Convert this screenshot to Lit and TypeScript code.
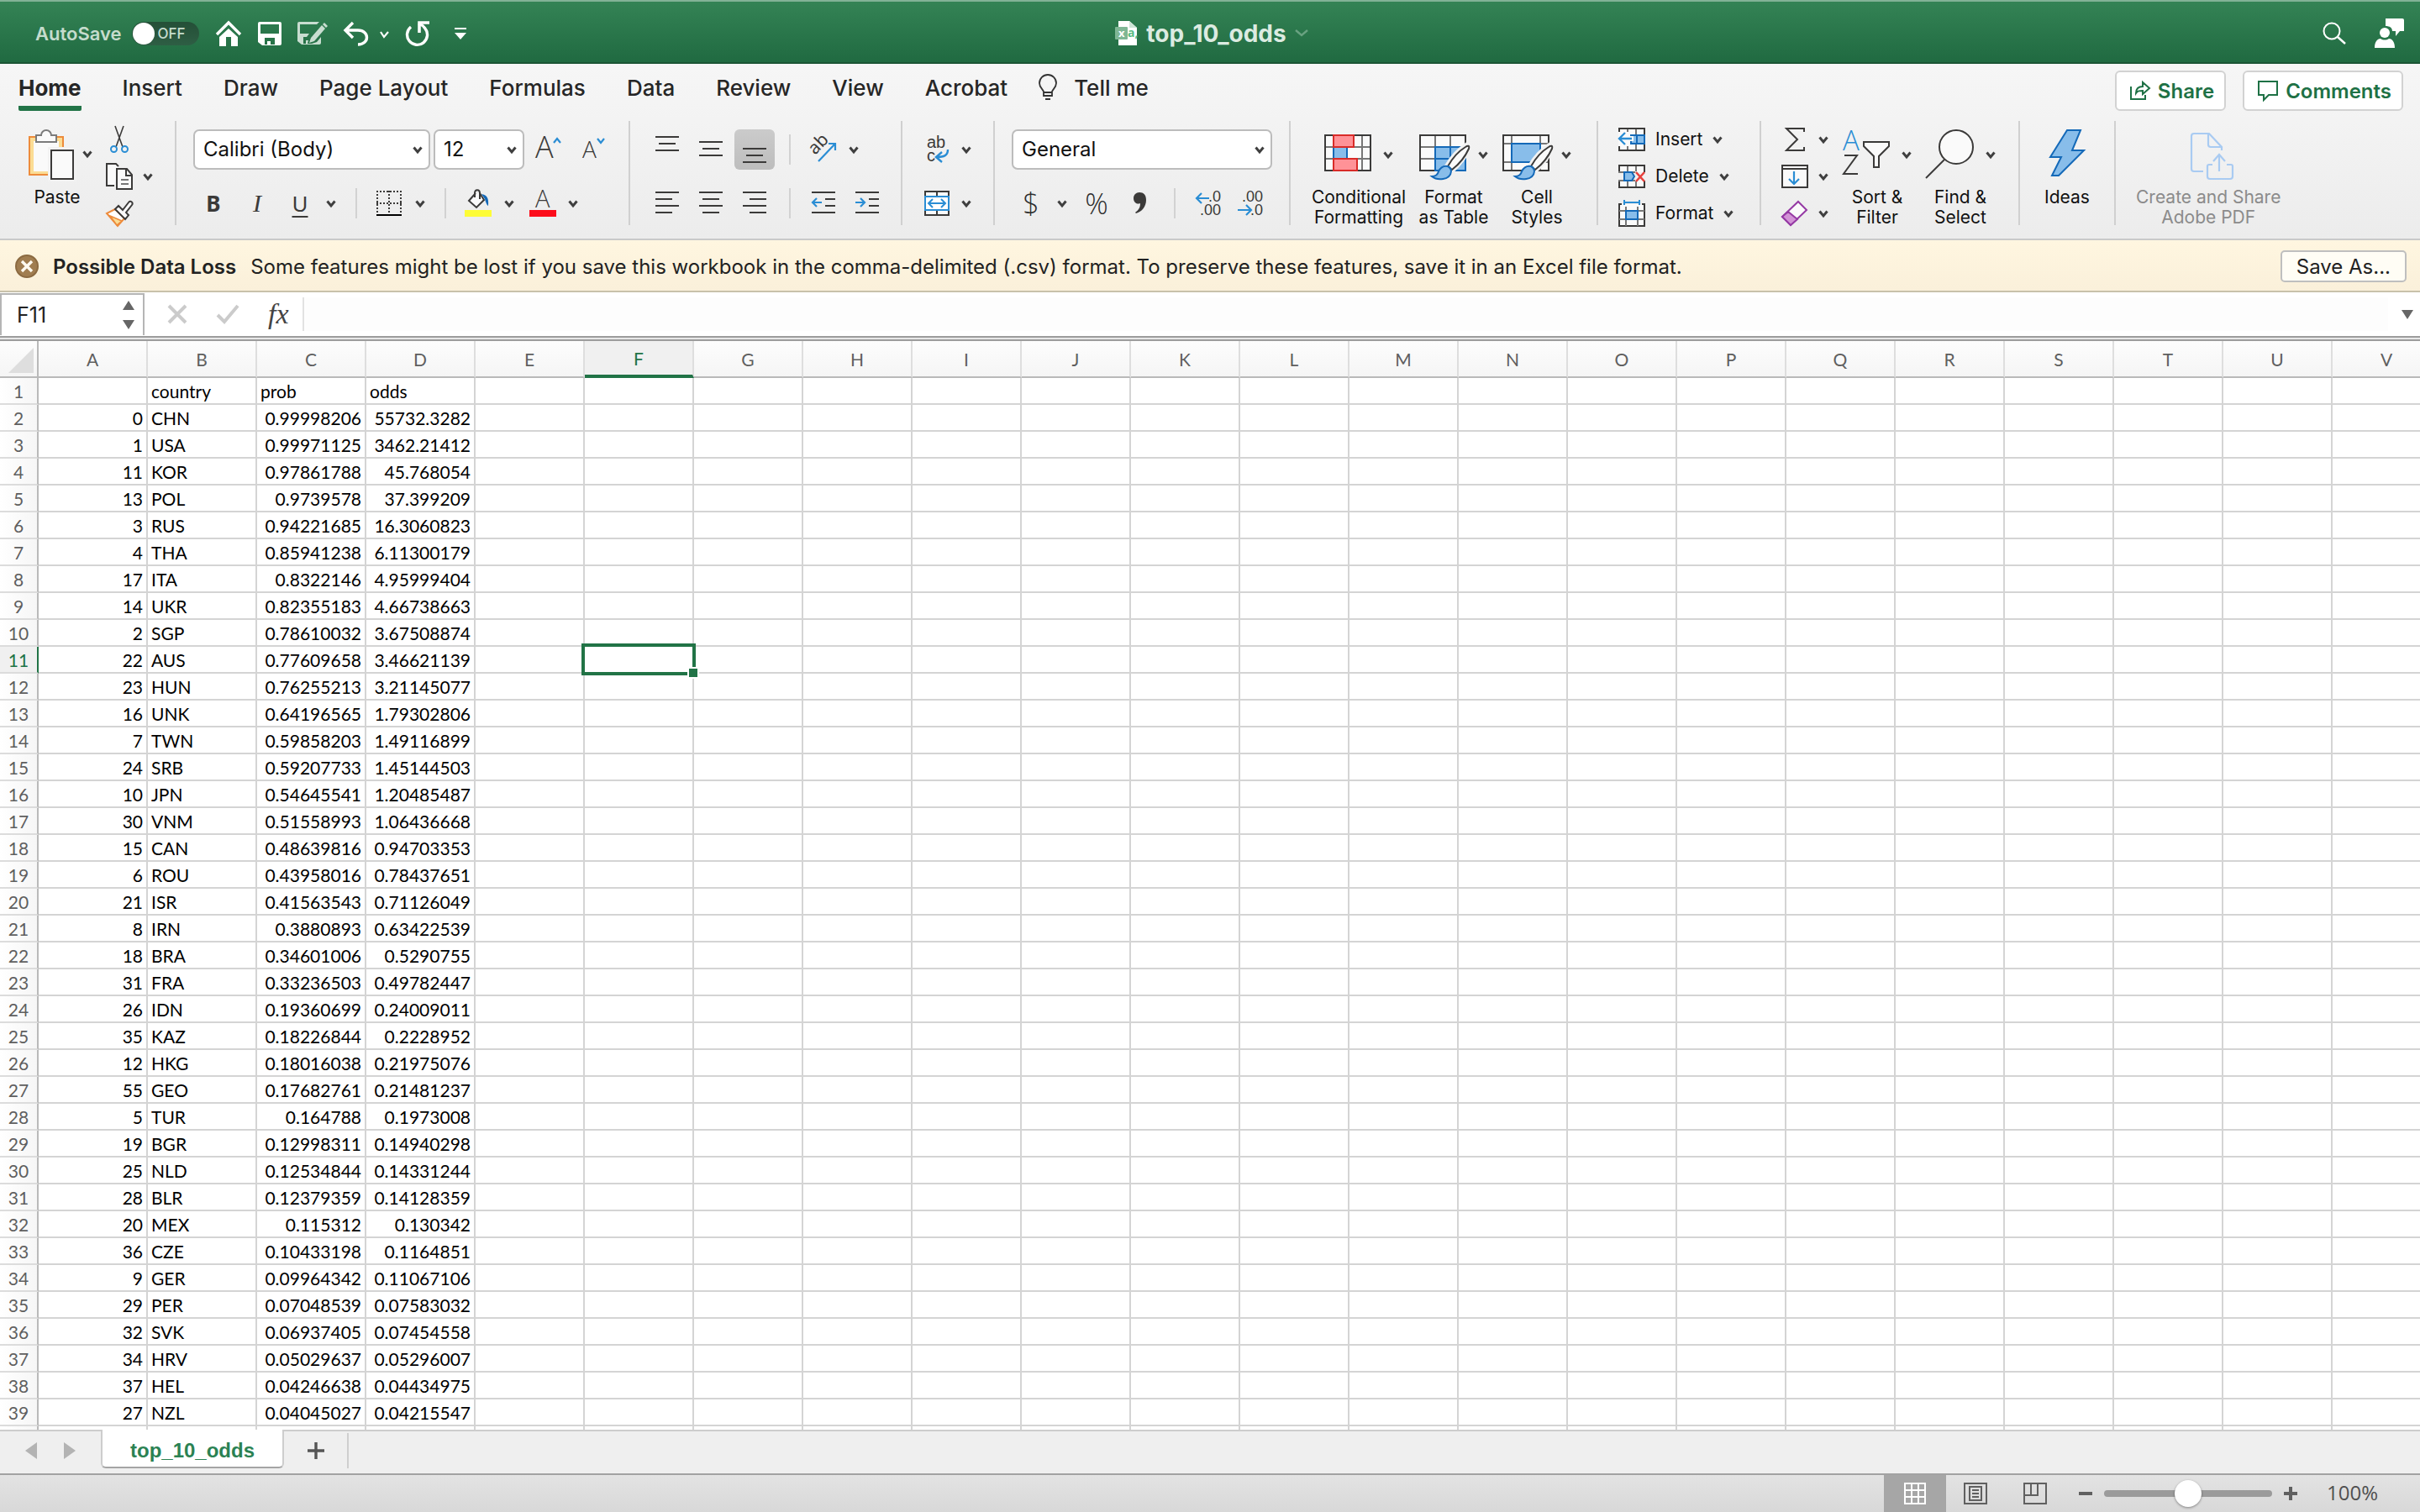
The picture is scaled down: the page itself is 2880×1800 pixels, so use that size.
import { LitElement, html, css, svg } from "lit";
import { customElement, property } from "lit/decorators.js";
import { classMap } from "lit/directives/class-map.js";

type Row = [string, string, string, string];

const ROWS: Row[] = [
  ["", "country", "prob", "odds"],
  ["0", "CHN", "0.99998206", "55732.3282"],
  ["1", "USA", "0.99971125", "3462.21412"],
  ["11", "KOR", "0.97861788", "45.768054"],
  ["13", "POL", "0.9739578", "37.399209"],
  ["3", "RUS", "0.94221685", "16.3060823"],
  ["4", "THA", "0.85941238", "6.11300179"],
  ["17", "ITA", "0.8322146", "4.95999404"],
  ["14", "UKR", "0.82355183", "4.66738663"],
  ["2", "SGP", "0.78610032", "3.67508874"],
  ["22", "AUS", "0.77609658", "3.46621139"],
  ["23", "HUN", "0.76255213", "3.21145077"],
  ["16", "UNK", "0.64196565", "1.79302806"],
  ["7", "TWN", "0.59858203", "1.49116899"],
  ["24", "SRB", "0.59207733", "1.45144503"],
  ["10", "JPN", "0.54645541", "1.20485487"],
  ["30", "VNM", "0.51558993", "1.06436668"],
  ["15", "CAN", "0.48639816", "0.94703353"],
  ["6", "ROU", "0.43958016", "0.78437651"],
  ["21", "ISR", "0.41563543", "0.71126049"],
  ["8", "IRN", "0.3880893", "0.63422539"],
  ["18", "BRA", "0.34601006", "0.5290755"],
  ["31", "FRA", "0.33236503", "0.49782447"],
  ["26", "IDN", "0.19360699", "0.24009011"],
  ["35", "KAZ", "0.18226844", "0.2228952"],
  ["12", "HKG", "0.18016038", "0.21975076"],
  ["55", "GEO", "0.17682761", "0.21481237"],
  ["5", "TUR", "0.164788", "0.1973008"],
  ["19", "BGR", "0.12998311", "0.14940298"],
  ["25", "NLD", "0.12534844", "0.14331244"],
  ["28", "BLR", "0.12379359", "0.14128359"],
  ["20", "MEX", "0.115312", "0.130342"],
  ["36", "CZE", "0.10433198", "0.1164851"],
  ["9", "GER", "0.09964342", "0.11067106"],
  ["29", "PER", "0.07048539", "0.07583032"],
  ["32", "SVK", "0.06937405", "0.07454558"],
  ["34", "HRV", "0.05029637", "0.05296007"],
  ["37", "HEL", "0.04246638", "0.04434975"],
  ["27", "NZL", "0.04045027", "0.04215547"],
];

const COLUMNS = "ABCDEFGHIJKLMNOPQRSTUV".split("");

const INK = "#3b3a39";
const BLUE = "#2a8dd4";
const DEEP = "#1469b8";
const SKY = "#88bdea";
const PAPER = "#fafafa";

const chev = svg`<path d="M1.5 1.5 6 7 10.5 1.5" fill="none" stroke="#3f3f3f" stroke-width="3"/>`;
const chevron = () => html`<svg class="chev" width="12" height="9" viewBox="0 0 12 9">${chev}</svg>`;
const chevButton = (label: string) =>
  html`<button class="tool" aria-label=${label}>${chevron()}</button>`;

/* Horizontal strokes of the alignment icons: [x1, x2] for each line. */
const lines = (spans: number[][]) => html`<svg width="28" height="${spans.length * 8 - 4}" viewBox="0 0 28 ${spans.length * 8 - 4}">
  ${spans.map(([a, b], i) => svg`<path d="M${a} ${i * 8 + 1}H${b}" stroke="${INK}" stroke-width="2"/>`)}
</svg>`;

const brush = svg`
  <path d="M56 19c2-2 4 0 3 3-4 9-12 20-20 27l-6-5c5-9 14-19 23-25z" fill="#f2f2f2" stroke="#f2f2f2" stroke-width="6"/>
  <path d="M55 21c3-2 5-2 4 2-4 9-11 18-20 25l-5-4c5-9 13-18 21-23z" fill="${PAPER}" stroke="${INK}" stroke-width="2"/>
  <path d="M34 44c-5-1-9 2-11 6-1 4-3 6-8 6 6 5 22 5 23-6 0-3-2-5-4-6z" fill="${SKY}" stroke="${DEEP}" stroke-width="2"/>`;

const icons = {
  home: html`<svg width="32" height="32" viewBox="0 0 32 32"><path d="M2 17 16 3l14 14" fill="none" stroke="#fff" stroke-width="3.4"/><path d="M16 10 27 20v11h-8V20h-6v11H5V20z" fill="#fff"/></svg>`,
  save: html`<svg width="28" height="30" viewBox="0 0 28 30"><path fill-rule="evenodd" d="M2 1h24a2 2 0 0 1 2 2v24a2 2 0 0 1-2 2H5l-5-4V3a2 2 0 0 1 2-2zM3 4v11h22V4zM8 20v8h3v-4h4v4h5v-8z" fill="#fff"/></svg>`,
  saveEdit: html`<svg width="36" height="32" viewBox="0 0 36 32"><path fill-rule="evenodd" d="M2 2h24l-3 3H3v11h11l-3 4H7v8h3v-4h3l-1 4h5l6-2 5-6v7a2 2 0 0 1-2 2H5l-5-4V4a2 2 0 0 1 2-2z" fill="#c8ddd0"/><path d="m29 6 4 4-13 15-6 2 2-6z" fill="#c8ddd0"/><path d="m30 5 2-2 4 4-2 2z" fill="#c8ddd0"/></svg>`,
  undo: html`<svg width="54" height="32" viewBox="0 0 54 32"><path d="M11 3 2 12l9 9M3 12h14c14 0 14 17 0 17" fill="none" stroke="#fff" stroke-width="3.4"/><path d="m44 14 4 6 5-6" fill="none" stroke="#fff" stroke-width="2.2"/></svg>`,
  redo: html`<svg width="30" height="32" viewBox="0 0 30 32"><path d="M7 8a12 12 0 1 0 17 2c-2-3-5-5-8-6" fill="none" stroke="#fff" stroke-width="3.4"/><path d="M17 15V3h12" fill="none" stroke="#fff" stroke-width="3.6"/></svg>`,
  customise: html`<svg width="36" height="32" viewBox="0 0 36 32"><path d="M10 9h14v2H10zM10 15h14l-7 8z" fill="#fff"/></svg>`,
  file: html`<svg width="27" height="30" viewBox="0 0 27 30"><path d="M4 0h13l9 8v21H4z" fill="#fff"/><path d="M17 0v8h9z" fill="#cfe5d7"/><rect y="7" width="15" height="15" rx="1" fill="#7fb795"/><text x="4" y="19" class="glyph" font-size="13" font-weight="700" fill="#fff">x</text><text x="15" y="19" class="glyph" font-size="14" fill="#58bd85">a,</text></svg>`,
  titleChev: html`<svg width="16" height="10" viewBox="0 0 16 10"><path d="m1 1 7 6 7-6" fill="none" stroke="#69a281" stroke-width="2.4"/></svg>`,
  search: html`<svg width="28" height="28" viewBox="0 0 28 28"><circle cx="11" cy="11" r="9.5" fill="none" stroke="#fff" stroke-width="2"/><path d="m18 18 9 8" stroke="#fff" stroke-width="2.4"/></svg>`,
  person: html`<svg width="36" height="38" viewBox="0 0 36 38"><path d="M15 1h18a2 2 0 0 1 2 2v13h-5l-5 6v-6h-4c0-4-3-6-8-6V1z" fill="#fff"/><circle cx="12" cy="18" r="7.5" fill="#2a784c"/><circle cx="12" cy="18" r="6" fill="#fff"/><path d="M0 36c0-7 3-11 7-11 3 2 7 2 10 0 4 0 7 4 7 11z" fill="#fff"/></svg>`,
  bulb: html`<svg width="22" height="32" viewBox="0 0 22 32"><path d="M6 25v-5c-1-3-5-5-5-10a10 10 0 0 1 20 0c0 5-4 7-5 10v5zM6 21h10M8 29h6" fill="none" stroke="#333" stroke-width="1.8"/></svg>`,
  share: html`<svg width="26" height="26" viewBox="0 0 26 26"><path d="M2 8v15h17v-5M8 16c0-6 3-8 8-8V3l8 7-8 7v-4c-4 0-6 0-8 3z" fill="none" stroke="#1e7145" stroke-width="2"/></svg>`,
  comment: html`<svg width="26" height="26" viewBox="0 0 26 26"><path d="M2 2h22v16H14l-6 6v-6H2z" fill="none" stroke="#1e7145" stroke-width="2"/></svg>`,
  paste: html`<svg width="84" height="60" viewBox="0 0 84 60"><path d="M9 9h40v45H9z" fill="#fbdc94" stroke="#ed8b3b" stroke-width="2"/><path d="M14 14h30v36H14z" fill="${PAPER}"/><path d="M31 21h34v41H31z" fill="#f2f2f2"/><path d="M17 15V7h6a6 6 0 0 1 12 0h6v8z" fill="${PAPER}" stroke="#7b7b7b" stroke-width="2"/><path d="M35 25h26v34H35z" fill="${PAPER}" stroke="${INK}" stroke-width="2"/><g transform="translate(72 25)">${chev}</g></svg>`,
  cut: html`<svg width="32" height="32" viewBox="0 0 32 32"><path d="m11 0 9 25M21 0l-9 25" stroke="${INK}" stroke-width="1.6" fill="none"/><circle cx="9.500" cy="27.500" r="3.500" fill="none" stroke="${BLUE}" stroke-width="2"/><circle cx="22.500" cy="27.500" r="3.500" fill="none" stroke="${BLUE}" stroke-width="2"/></svg>`,
  copy: html`<svg width="32" height="32" viewBox="0 0 32 32"><path d="M10 27H1V1h11l3 3" fill="${PAPER}" stroke="${INK}" stroke-width="2"/><path d="M13 7h12l6 7v17H13z" fill="${PAPER}" stroke="${INK}" stroke-width="2"/><path d="M24 7v8h7" fill="none" stroke="${INK}" stroke-width="2"/><path d="M18 20h9M18 25h9" stroke="#777" stroke-width="2"/></svg>`,
  painter: html`<svg width="32" height="32" viewBox="0 0 32 32"><path d="M11 11 1 16l13 15 8-9z" fill="#fff" stroke="#ed8b3b" stroke-width="2"/><path d="m5 19 14 6-6 5z" fill="#fbdc94" stroke="#ed8b3b" stroke-width="1.500"/><path d="m11 11 4-4 5 5 7-9c2-3 6 0 4 3l-7 9 3 3-4 5z" fill="${PAPER}" stroke="${INK}" stroke-width="2"/></svg>`,
  grow: html`<svg width="36" height="32" viewBox="0 0 36 32"><text x="2" y="26" class="glyph thin" font-size="36" fill="${INK}">A</text><path d="m24 8 4-5 4 5" fill="none" stroke="${BLUE}" stroke-width="2.2"/></svg>`,
  shrink: html`<svg width="32" height="32" viewBox="0 0 32 32"><text x="3" y="26" class="glyph thin" font-size="28" fill="${INK}">A</text><path d="m21 3 4 5 4-5" fill="none" stroke="${BLUE}" stroke-width="2.2"/></svg>`,
  borders: html`<svg width="30" height="30" viewBox="0 0 30 30"><path d="M0 1h30M0 15h30M1 0v26M15 0v26M29 0v26" stroke="${INK}" stroke-width="2" stroke-dasharray="2 2"/><path d="M0 29h30" stroke="#000" stroke-width="2"/></svg>`,
  fill: html`<svg width="32" height="34" viewBox="0 0 32 34"><path d="M13 5 5 14l9 8 9-9-5-8" fill="${PAPER}" stroke="${INK}" stroke-width="2"/><path d="M12 10V5c0-5 6-5 6 0v7" fill="none" stroke="${INK}" stroke-width="2"/><path d="M20 6c6 1 9 4 8 14-2-1-3-5-4-8z" fill="${DEEP}"/><path d="M0 25h32v8H0z" fill="#fdfc36"/></svg>`,
  fontColor: html`<svg width="32" height="34" viewBox="0 0 32 34"><text x="7" y="22" class="glyph thin" font-size="29" fill="${INK}">A</text><path d="M0 25h32v8H0z" fill="#fc0d1b"/></svg>`,
  orient: html`<svg width="34" height="32" viewBox="0 0 34 32"><text x="0" y="0" transform="translate(8 23) rotate(-46)" class="glyph" font-size="21" fill="${INK}">ab</text><path d="M12 30 32 9M24 9h8v8" fill="none" stroke="${BLUE}" stroke-width="2.2"/></svg>`,
  wrap: html`<svg width="30" height="34" viewBox="0 0 30 34"><text x="3" y="15" class="narrow" font-size="20" fill="${INK}">ab</text><text x="3" y="31" class="narrow" font-size="20" fill="${INK}">c</text><path d="M28 17c0 7-4 9-14 9m7-6-7 6 7 6" fill="none" stroke="${BLUE}" stroke-width="2.4"/></svg>`,
  outdent: html`<svg width="28" height="28" viewBox="0 0 28 28"><path d="M0 1h28M16 9h12M16 17h12M0 25h28" stroke="${INK}" stroke-width="2"/><path d="M1 13h11M6 8l-5 5 5 5" fill="none" stroke="${BLUE}" stroke-width="2.2"/></svg>`,
  indent: html`<svg width="28" height="28" viewBox="0 0 28 28"><path d="M0 1h28M16 9h12M16 17h12M0 25h28" stroke="${INK}" stroke-width="2"/><path d="M0 13h11M6 8l5 5-5 5" fill="none" stroke="${BLUE}" stroke-width="2.2"/></svg>`,
  merge: html`<svg width="30" height="30" viewBox="0 0 30 30"><path d="M1 1h28v28H1zM15 0v6M15 24v6" fill="${PAPER}" stroke="${INK}" stroke-width="2"/><path d="M1 7h28v16H1z" fill="#fff" stroke="${BLUE}" stroke-width="2"/><path d="M5 15h20M10 10l-5 5 5 5M20 10l5 5-5 5" fill="none" stroke="${BLUE}" stroke-width="2"/></svg>`,
  comma: html`<svg width="16" height="28" viewBox="0 0 16 28"><path d="M7 1c5 0 8 3 8 9 0 8-5 14-12 16l-1-1c4-3 6-6 6-11-5 2-8-2-8-6 0-4 3-7 7-7z" fill="${INK}"/></svg>`,
  decInc: html`<svg width="32" height="32" viewBox="0 0 32 32"><text x="16" y="14" class="narrow" font-size="18" fill="${INK}">.0</text><text x="6" y="30" class="narrow" font-size="18" fill="${INK}">.00</text><path d="M17 10H2M8 4l-6 6 6 6" fill="none" stroke="${BLUE}" stroke-width="2.2"/></svg>`,
  decDec: html`<svg width="32" height="32" viewBox="0 0 32 32"><text x="6" y="14" class="narrow" font-size="18" fill="${INK}">.00</text><text x="16" y="30" class="narrow" font-size="18" fill="${INK}">.0</text><path d="M1 24h16M11 18l6 6-6 6" fill="none" stroke="${BLUE}" stroke-width="2.2"/></svg>`,
  conditional: html`<svg width="56" height="60" viewBox="0 0 56 60"><path d="M1 7h54v42H1z" fill="${PAPER}"/><path d="M1 21h54M1 35h54M11 7v42M45 7v42" stroke="#777" stroke-width="2"/><path d="M1 7h54v42H1z" fill="none" stroke="${INK}" stroke-width="2"/><path d="M28 22h16v12H28z" fill="${PAPER}"/><path d="M11 21h16v14H11z" fill="${SKY}" stroke="${DEEP}" stroke-width="2"/><path d="M11 7h24v14H11zM11 35h28v14H11z" fill="#ff9297" stroke="#d92b28" stroke-width="2"/></svg>`,
  tableStyle: html`<svg width="56" height="60" viewBox="0 0 56 60"><path d="M1 7h54v42H1z" fill="${PAPER}"/><path d="M1 21h54M1 35h54M19 7v42M37 7v42" stroke="#777" stroke-width="2"/><path d="M1 7h54v42H1z" fill="none" stroke="${INK}" stroke-width="2"/><path d="M19 21h36v28H19zM19 35h36M37 21v28" fill="${SKY}" stroke="${DEEP}" stroke-width="2"/>${brush}</svg>`,
  cellStyle: html`<svg width="56" height="60" viewBox="0 0 56 60"><path d="M1 7h54v42H1z" fill="${PAPER}"/><path d="M1 17h54M1 39h54M11 7v42M45 7v42" stroke="#777" stroke-width="2"/><path d="M1 7h54v42H1z" fill="none" stroke="${INK}" stroke-width="2"/><path d="M11 17h34v22H11z" fill="${SKY}" stroke="${DEEP}" stroke-width="2"/>${brush}</svg>`,
  cellInsert: html`<svg width="32" height="28" viewBox="0 0 32 28"><path d="M1 1h30v26H1z" fill="${PAPER}"/><path d="M1 9h30M1 19h30M11 1v26M21 1v26" stroke="#777" stroke-width="2"/><path d="M1 1h30v26H1z" fill="none" stroke="${INK}" stroke-width="2"/><path d="M0 5h17v17H0z" fill="${PAPER}"/><path d="M15 9h16v10H15zM22 9v10" fill="${SKY}" stroke="${DEEP}" stroke-width="2"/><path d="M14 10h4v6h-4z" fill="${PAPER}"/><path d="M16 13H2M8 6l-7 7 7 7" fill="none" stroke="${BLUE}" stroke-width="2.4"/></svg>`,
  cellDelete: html`<svg width="32" height="28" viewBox="0 0 32 28"><path d="M1 9V1h30v8M1 19v8h30v-8" fill="${PAPER}" stroke="${INK}" stroke-width="2"/><path d="M11 2v6M21 2v6M11 20v6M21 20v6M0 9h20M0 19h20" stroke="#777" stroke-width="2"/><path d="M7 9h9l3 5-3 5H7z" fill="${SKY}" stroke="${DEEP}" stroke-width="2"/><path d="m21 9 10 11M31 9 21 20" stroke="#e8403c" stroke-width="2.6"/></svg>`,
  cellFormat: html`<svg width="32" height="32" viewBox="0 0 32 32"><path d="M4 5H1v26h30V5h-3" fill="${PAPER}" stroke="${INK}" stroke-width="2"/><path d="M1 13h30M1 23h30M9 8v23M23 8v23" stroke="#777" stroke-width="2"/><path d="M9 13h14v10H9z" fill="${SKY}" stroke="${DEEP}" stroke-width="2"/><path d="M7 0v6M25 0v6M7 3h18" stroke="${BLUE}" stroke-width="2"/></svg>`,
  sum: html`<svg width="32" height="28" viewBox="0 0 32 28"><path d="M27 5V1H6l13 13L6 27h21v-4" fill="none" stroke="${INK}" stroke-width="2"/></svg>`,
  fillDown: html`<svg width="32" height="28" viewBox="0 0 32 28"><path d="M1 1h30v26H1zM1 5h30" fill="${PAPER}" stroke="${INK}" stroke-width="2"/><path d="M15 8v15M9 17l6 6 6-6" fill="none" stroke="${BLUE}" stroke-width="2.2"/></svg>`,
  eraser: html`<svg width="32" height="32" viewBox="0 0 32 32"><path d="m20 2 10 10-19 18L1 20z" fill="${PAPER}" stroke="#9539a4" stroke-width="2"/><path d="m8 14 11 9-8 7L1 20z" fill="#d293d6" stroke="#9539a4" stroke-width="2"/></svg>`,
  sort: html`<svg width="56" height="60" viewBox="0 0 56 60"><text x="0" y="25" class="glyph thin" font-size="33" fill="${BLUE}">A</text><path d="M2 31h15L1 53h17" fill="none" stroke="${INK}" stroke-width="2"/><path d="M25 15h30v5L43 32v13h-6V32L25 20z" fill="${PAPER}" stroke="${INK}" stroke-width="2"/></svg>`,
  find: html`<svg width="58" height="60" viewBox="0 0 58 60"><circle cx="37" cy="21" r="20" fill="${PAPER}" stroke="${INK}" stroke-width="2"/><path d="M23 36 1 58" stroke="${INK}" stroke-width="2"/></svg>`,
  ideas: html`<svg width="44" height="60" viewBox="0 0 44 60"><path d="M22 1h16L28 25h14L12 55H4l11-22H2z" fill="${SKY}" stroke="${DEEP}" stroke-width="2"/></svg>`,
  adobe: html`<svg width="44" height="60" viewBox="0 0 44 60"><path d="M16 50H5a3 3 0 0 1-3-3V8a3 3 0 0 1 3-3h18l15 16v4M22 5v13a3 3 0 0 0 3 3h13M27 42h-4a2 2 0 0 0-2 2v12a3 3 0 0 0 3 3h24a3 3 0 0 0 3-3V44a2 2 0 0 0-2-2h-5M35 50V31M28 38l7-8 7 8" fill="none" stroke="#a9cbf2" stroke-width="2.2"/></svg>`,
  warn: html`<svg width="28" height="28" viewBox="0 0 28 28"><circle cx="14" cy="14" r="13" fill="#a07d50" stroke="#8b6a41" stroke-width="2"/><path d="m8 8 12 12M20 8 8 20" stroke="#fffaf0" stroke-width="3.4"/></svg>`,
  cancel: html`<svg width="24" height="24" viewBox="0 0 24 24"><path d="m2 2 20 20M22 2 2 22" stroke="#cbcbcb" stroke-width="4"/></svg>`,
  accept: html`<svg width="28" height="24" viewBox="0 0 28 24"><path d="m2 13 8 8L26 2" fill="none" stroke="#cbcbcb" stroke-width="4"/></svg>`,
  updown: html`<svg width="14" height="34" viewBox="0 0 14 34"><path d="M7 0l7 11H0zM0 23h14L7 34z" fill="#666"/></svg>`,
  expand: html`<svg width="14" height="11" viewBox="0 0 14 11"><path d="M0 0h14L7 11z" fill="#666"/></svg>`,
  prev: html`<svg width="14" height="20" viewBox="0 0 14 20"><path d="M14 0v20L0 10z" fill="#b3b3b3"/></svg>`,
  next: html`<svg width="14" height="20" viewBox="0 0 14 20"><path d="M0 0v20l14-10z" fill="#b3b3b3"/></svg>`,
  add: html`<svg width="22" height="22" viewBox="0 0 22 22"><path d="M1 11h20M11 1v20" stroke="#555" stroke-width="3.4"/></svg>`,
  viewGrid: html`<svg width="26" height="26" viewBox="0 0 26 26"><path d="M1 1h24v24H1zM1 9h24M1 17h24M9 1v24M17 1v24" fill="none" stroke="#fff" stroke-width="2"/></svg>`,
  viewPage: html`<svg width="28" height="26" viewBox="0 0 28 26"><path d="M1 1h26v24H1zM7 5h14v16H7z" fill="none" stroke="#606060" stroke-width="2"/><path d="M10 9h8M10 13h8M10 17h8" stroke="#606060" stroke-width="2"/></svg>`,
  viewBreak: html`<svg width="28" height="26" viewBox="0 0 28 26"><path d="M1 1h26v24H1zM1 15h16V1M9 1v14" fill="none" stroke="#606060" stroke-width="2"/></svg>`,
  minus: html`<svg width="16" height="16" viewBox="0 0 16 16"><path d="M0 8h16" stroke="#606060" stroke-width="4"/></svg>`,
  plus: html`<svg width="16" height="16" viewBox="0 0 16 16"><path d="M0 8h16M8 0v16" stroke="#606060" stroke-width="4"/></svg>`,
};

const shared = css`
  * { box-sizing: border-box; }
  button, input, select {
    font: inherit;
    color: inherit;
    margin: 0;
    padding: 0;
    border: 0;
    border-radius: 0;
    background: none;
    outline: none;
  }
  svg { display: block; flex: none; overflow: visible; }
  .glyph { font-family: "Noto Sans", sans-serif; }
  .narrow { font-family: "Liberation Sans", sans-serif; }
  .thin { font-family: "Open Sans", "Noto Sans", sans-serif; font-weight: 300; }
`;

@customElement("title-bar")
export class TitleBar extends LitElement {
  static styles = [shared, css`
    :host { display: block; }
    .bar {
      display: grid;
      grid-template-columns: 1fr auto 1fr;
      align-items: center;
      height: 76px;
      padding-top: 4px;
      color: #d3e6da;
      background: linear-gradient(#348355, #206a41);
      border-top: 2px solid #82b296;
      border-bottom: 2px solid #1b5535;
    }
    .quick { display: flex; align-items: center; gap: 19px; padding-left: 42px; }
    .auto { display: flex; align-items: center; gap: 12px; font-size: 22px; font-weight: 600; color: #c5dccd; }
    .switch { display: grid; align-items: center; }
    .switch input {
      grid-area: 1 / 1;
      appearance: none;
      width: 80px;
      height: 28px;
      border-radius: 14px;
      background: linear-gradient(#244f37, #2e5e44);
    }
    .switch input::before {
      content: "";
      display: block;
      width: 26px;
      height: 26px;
      margin: 1px;
      border-radius: 50%;
      background: #fff;
    }
    .off { grid-area: 1 / 1; justify-self: end; margin-right: 16px; font-size: 17px; font-weight: 500; }
    .name { display: flex; align-items: center; gap: 10px; padding-left: 4px; font-size: 28px; font-weight: 700; line-height: 32px; color: #dcebe1; }
    .end { display: flex; justify-content: flex-end; align-items: center; gap: 34px; padding-right: 18px; }
  `];
  render() {
    return html`<header class="bar">
      <div class="quick">
        <label class="auto">AutoSave
          <span class="switch"><input type="checkbox" role="switch" /><span class="off">OFF</span></span>
        </label>
        <button aria-label="Home">${icons.home}</button>
        <button aria-label="Save">${icons.save}</button>
        <button aria-label="Save as">${icons.saveEdit}</button>
        <button aria-label="Undo">${icons.undo}</button>
        <button aria-label="Redo">${icons.redo}</button>
        <button aria-label="Customize toolbar">${icons.customise}</button>
      </div>
      <div class="name">${icons.file}<span>top_10_odds</span>${icons.titleChev}</div>
      <div class="end">
        <button aria-label="Search">${icons.search}</button>
        <button aria-label="Account">${icons.person}</button>
      </div>
    </header>`;
  }
}

@customElement("ribbon-tabs")
export class RibbonTabs extends LitElement {
  static styles = [shared, css`
    :host { display: block; }
    .bar { display: flex; height: 68px; padding: 8px 20px 0 22px; background: linear-gradient(#f6f6f6, #f3f3f3); }
    .tabs { display: flex; align-items: flex-start; gap: 49px; font-size: 26px; font-weight: 500; color: #262626; }
    .tab { padding: 5px 0; line-height: 32px; }
    .tab.on { font-weight: 700; border-bottom: 6px solid #217346; border-radius: 2px; }
    .tell { display: flex; gap: 20px; margin-left: -12px; }
    .actions { margin-left: auto; display: flex; gap: 20px; }
    .action {
      display: flex;
      align-items: center;
      gap: 8px;
      height: 48px;
      padding: 0 12px 0 15px;
      font-size: 24px;
      font-weight: 600;
      color: #1e7145;
      background: #fff;
      border: 2px solid #d2d2d2;
      border-radius: 6px;
    }
  `];
  render() {
    const tabs = ["Home", "Insert", "Draw", "Page Layout", "Formulas", "Data", "Review", "View", "Acrobat"];
    return html`<nav class="bar">
      <div class="tabs">
        ${tabs.map((t, i) => html`<button class=${classMap({ tab: true, on: i === 0 })}>${t}</button>`)}
        <button class="tab tell">${icons.bulb}Tell me</button>
      </div>
      <div class="actions">
        <button class="action">${icons.share}Share</button>
        <button class="action">${icons.comment}Comments</button>
      </div>
    </nav>`;
  }
}

@customElement("ribbon-panel")
export class RibbonPanel extends LitElement {
  static styles = [shared, css`
    :host { display: block; }
    .ribbon {
      display: flex;
      padding-bottom: 16px;
      background: linear-gradient(#f3f3f3, #ececec);
      border-bottom: 2px solid #c9c9c9;
      font-size: 21px;
      line-height: 24px;
      color: #111;
    }
    .group { display: flex; height: 124px; border-right: 2px solid #d0d0d0; }
    .group:last-child { border-right: 0; }
    .stack { display: flex; flex-direction: column; gap: 16px; padding: 10px 20px 0; }
    .stack.fonts { padding-right: 18px; }
    .stack.tight { padding-left: 18px; }
    .stack.align { padding: 10px 12px 0 18px; }
    .row { display: grid; height: 48px; align-items: center; justify-items: center; justify-content: start; }
    .font-top { grid-template-columns: 282px 108px 50px 48px; gap: 4px; }
    .font-low { grid-template-columns: 48px 56px 46px 28px 32px 46px 28px 32px 46px 28px 52px 20px; }
    .align-top { grid-template-columns: 52px 52px 52px 32px 46px 28px; }
    .align-low { grid-template-columns: 52px 52px 52px 32px 48px 56px; }
    .pair { grid-template-columns: 46px 24px; }
    .num-top { grid-template-columns: 310px; }
    .num-low { grid-template-columns: 46px 28px 54px 50px 32px 48px 52px; }
    .tool { display: grid; place-items: center; height: 48px; min-width: 20px; }
    .tool.top { align-content: start; padding-top: 8px; }
    .tool.mid { align-content: start; padding-top: 14px; }
    .tool.low { align-content: start; padding-top: 22px; width: 48px; border-radius: 6px; background: linear-gradient(#cbcbcb, #bdbdbd); }
    .sep { width: 2px; height: 36px; background: #d2d2d2; }
    .bold, .italic, .under { font-size: 26px; color: #3b3a39; font-family: "Noto Sans", sans-serif; }
    .bold { font-weight: 700; }
    .italic { font-family: "Liberation Serif", serif; font-style: italic; font-size: 30px; }
    .under { text-decoration: underline; text-underline-offset: 5px; text-decoration-thickness: 2px; }
    .sign { font-family: "Open Sans", "Noto Sans", sans-serif; font-weight: 300; font-size: 34px; color: #2d2d2d; }
    .field { display: grid; width: 100%; align-items: center; }
    .field select {
      grid-area: 1 / 1;
      appearance: none;
      width: 100%;
      height: 48px;
      padding: 0 32px 0 10px;
      font-size: 24px;
      color: #111;
      background: #fff;
      border: 2px solid #bcbcbc;
      border-radius: 7px;
    }
    .field svg { grid-area: 1 / 1; justify-self: end; margin-right: 9px; pointer-events: none; }
    .small { display: flex; flex-direction: column; gap: 16px; padding-top: 8px; }
    .small button { display: flex; align-items: center; gap: 12px; height: 28px; }
    .big { display: flex; flex-direction: column; align-items: center; gap: 9px; padding-top: 10px; line-height: 24px; }
    .art { display: flex; align-items: center; gap: 14px; height: 60px; }
    .clip { padding: 0 26px; gap: 16px; }
    .styles { padding: 0 26px 0 22px; }
    .cond { width: 118px; }
    .tbl { width: 108px; }
    .cell { width: 90px; }
    .cells { padding: 0 26px 0 24px; }
    .cells .small { width: 142px; }
    .editing { padding: 0 28px 0 24px; }
    .editing .big { width: 82px; margin-left: 17px; }
    .ideas { padding: 0 26px; }
    .ideas .big { width: 60px; }
    .adobe { padding: 0 24px; }
    .muted { color: #8b8b8b; }
    .nowrap { white-space: nowrap; }
  `];

  private select(label: string, value: string) {
    return html`<label class="field"><select aria-label=${label}><option>${value}</option></select>${chevron()}</label>`;
  }

  private big(cls: string, icon: unknown, first: string, second = "", arrow = true) {
    return html`<button class="big ${cls}">
      <span class="art">${icon}${arrow ? chevron() : ""}</span>
      <span class="nowrap">${first}${second ? html`<br />${second}` : ""}</span>
    </button>`;
  }

  render() {
    return html`<div class="ribbon">
      <section class="group clip">
        <button class="big"><span class="art">${icons.paste}</span><span>Paste</span></button>
        <div class="small">
          <button aria-label="Cut">${icons.cut}</button>
          <button aria-label="Copy">${icons.copy}${chevron()}</button>
          <button aria-label="Format painter">${icons.painter}</button>
        </div>
      </section>
      <section class="group stack fonts">
        <div class="row font-top">
          ${this.select("Font", "Calibri (Body)")} ${this.select("Font size", "12")}
          <button class="tool" aria-label="Increase font size">${icons.grow}</button>
          <button class="tool" aria-label="Decrease font size">${icons.shrink}</button>
        </div>
        <div class="row font-low">
          <button class="tool bold">B</button>
          <button class="tool italic">I</button>
          <button class="tool under">U</button>
          ${chevButton("Underline options")}
          <span class="sep"></span>
          <button class="tool" aria-label="Borders">${icons.borders}</button>
          ${chevButton("Border options")}
          <span class="sep"></span>
          <button class="tool" aria-label="Fill color">${icons.fill}</button>
          ${chevButton("Fill color options")}
          <button class="tool" aria-label="Font color">${icons.fontColor}</button>
          ${chevButton("Font color options")}
        </div>
      </section>
      <section class="group stack align">
        <div class="row align-top">
          <button class="tool top" aria-label="Align top">${lines([[0, 28], [4, 24], [0, 28]])}</button>
          <button class="tool mid" aria-label="Align middle">${lines([[0, 28], [4, 24], [0, 28]])}</button>
          <button class="tool low" aria-label="Align bottom" aria-pressed="true">${lines([[0, 28], [4, 24], [0, 28]])}</button>
          <span class="sep"></span>
          <button class="tool" aria-label="Orientation">${icons.orient}</button>
          ${chevButton("Orientation options")}
        </div>
        <div class="row align-low">
          <button class="tool" aria-label="Align left">${lines([[0, 28], [0, 20], [0, 28], [0, 20]])}</button>
          <button class="tool" aria-label="Center">${lines([[0, 28], [4, 24], [0, 28], [4, 24]])}</button>
          <button class="tool" aria-label="Align right">${lines([[0, 28], [8, 28], [0, 28], [8, 28]])}</button>
          <span class="sep"></span>
          <button class="tool" aria-label="Decrease indent">${icons.outdent}</button>
          <button class="tool" aria-label="Increase indent">${icons.indent}</button>
        </div>
      </section>
      <section class="group stack tight">
        <div class="row pair"><button class="tool" aria-label="Wrap text">${icons.wrap}</button>${chevButton("Wrap options")}</div>
        <div class="row pair"><button class="tool" aria-label="Merge and center">${icons.merge}</button>${chevButton("Merge options")}</div>
      </section>
      <section class="group stack">
        <div class="row num-top">${this.select("Number format", "General")}</div>
        <div class="row num-low">
          <button class="tool sign">$</button>
          ${chevButton("Currency options")}
          <button class="tool sign">%</button>
          <button class="tool" aria-label="Comma style">${icons.comma}</button>
          <span class="sep"></span>
          <button class="tool" aria-label="Increase decimal">${icons.decInc}</button>
          <button class="tool" aria-label="Decrease decimal">${icons.decDec}</button>
        </div>
      </section>
      <section class="group styles">
        ${this.big("cond", icons.conditional, "Conditional", "Formatting")}
        ${this.big("tbl", icons.tableStyle, "Format", "as Table")}
        ${this.big("cell", icons.cellStyle, "Cell", "Styles")}
      </section>
      <section class="group cells">
        <div class="small">
          <button>${icons.cellInsert}Insert${chevron()}</button>
          <button>${icons.cellDelete}Delete${chevron()}</button>
          <button>${icons.cellFormat}Format${chevron()}</button>
        </div>
      </section>
      <section class="group editing">
        <div class="small">
          <button aria-label="AutoSum">${icons.sum}${chevron()}</button>
          <button aria-label="Fill">${icons.fillDown}${chevron()}</button>
          <button aria-label="Clear">${icons.eraser}${chevron()}</button>
        </div>
        ${this.big("", icons.sort, "Sort &", "Filter")}
        ${this.big("", icons.find, "Find &", "Select")}
      </section>
      <section class="group ideas">${this.big("", icons.ideas, "Ideas", "", false)}</section>
      <section class="group adobe">${this.big("muted", icons.adobe, "Create and Share", "Adobe PDF", false)}</section>
    </div>`;
  }
}

@customElement("notice-bar")
export class NoticeBar extends LitElement {
  static styles = [shared, css`
    :host { display: block; }
    .bar {
      display: flex;
      align-items: center;
      gap: 17px;
      height: 62px;
      padding: 2px 16px 0 18px;
      font-size: 24px;
      color: #222;
      white-space: nowrap;
      background: linear-gradient(#fff6e0, #faf0da);
      border-bottom: 2px solid #c8c1ab;
    }
    .strong { font-weight: 600; }
    .save { margin-left: auto; height: 38px; padding: 0 17px; background: #fffdf5; border: 2px solid #bfbfbf; border-radius: 5px; }
  `];
  render() {
    return html`<div class="bar" role="status">
      <button aria-label="Dismiss">${icons.warn}</button>
      <span class="strong">Possible Data Loss</span>
      <span>Some features might be lost if you save this workbook in the comma-delimited (.csv) format. To preserve these features, save it in an Excel file format.</span>
      <button class="save">Save As...</button>
    </div>`;
  }
}

@customElement("formula-bar")
export class FormulaBar extends LitElement {
  @property() cell = "F11";
  static styles = [shared, css`
    :host { display: block; background: #fff; }
    .bar { display: flex; align-items: center; height: 52px; background: #fff; padding-right: 8px; color: #222; }
    .edge { height: 6px; border-top: 2px solid #9d9d9d; border-bottom: 2px solid #9d9d9d; background: #e8e8e8; }
    .ref { display: flex; align-items: center; width: 172px; height: 50px; padding-right: 10px; border: 2px solid #b5b5b5; border-bottom: 0; }
    .ref input { flex: 1; min-width: 0; padding-left: 18px; font-size: 25px; }
    .cmds { display: flex; align-items: center; gap: 34px; padding-left: 27px; }
    .fx { font: italic 34px/40px "Liberation Serif", serif; color: #444; }
    .text { flex: 1; height: 40px; margin: 0 16px 0 16px; border-left: 2px solid #e2e2e2; background: #fdfdfd; padding-left: 14px; }
  `];
  render() {
    return html`<div class="bar">
      <div class="ref"><input aria-label="Name box" .value=${this.cell} /><button aria-label="Step">${icons.updown}</button></div>
      <div class="cmds">
        <button aria-label="Cancel">${icons.cancel}</button>
        <button aria-label="Enter">${icons.accept}</button>
        <button class="fx">fx</button>
      </div>
      <input class="text" aria-label="Formula" />
      <button aria-label="Expand formula bar">${icons.expand}</button>
    </div>
    <div class="edge"></div>`;
  }
}

@customElement("sheet-grid")
export class SheetGrid extends LitElement {
  @property({ type: Number }) row = 11;
  @property() column = "F";
  static styles = [shared, css`
    :host { display: block; overflow: hidden; background: #fff; }
    table { table-layout: fixed; width: 0; border-collapse: separate; border-spacing: 0; font: 21px/28px Lato, sans-serif; color: #000; }
    .c0 { width: 46px; }
    .cn { width: 130px; }
    th { padding: 2px 0 0; font-weight: 400; color: #5f5f5f; text-align: center; }
    thead th {
      height: 44px;
      border-right: 2px solid #dedede;
      border-bottom: 2px solid #b9b9b9;
      background: linear-gradient(#fdfdfd, #f5f5f5);
    }
    thead .corner { border-right-color: #b9b9b9; vertical-align: bottom; }
    .corner svg { margin: 0 4px 4px auto; }
    thead .on { color: #217346; background: #f0f0f0; border-bottom: 4px solid #217346; }
    tbody th { border-right: 2px solid #b9b9b9; border-bottom: 2px solid #dcdcdc; background: linear-gradient(90deg, #fff, #f6f6f6); }
    tbody th.on { color: #217346; background: #f0f0f0; border-right-color: #217346; }
    td { height: 32px; padding: 2px 4px 0; border-right: 2px solid #d4d4d4; border-bottom: 2px solid #d4d4d4; white-space: nowrap; }
    .num { text-align: right; }
    .active { position: relative; }
    .cursor { position: absolute; inset: -4px; border: 4px solid #217346; pointer-events: none; }
    .cursor::after {
      content: "";
      position: absolute;
      right: -8px;
      bottom: -8px;
      width: 10px;
      height: 10px;
      border: 2px solid #fff;
      background: #217346;
    }
  `];
  render() {
    const rows = [...ROWS, ["", "", "", ""] as Row];
    return html`<table>
      <colgroup><col class="c0" />${COLUMNS.map(() => html`<col class="cn" />`)}</colgroup>
      <thead><tr>
        <th class="corner" aria-label="Select all"><svg width="30" height="30" viewBox="0 0 30 30"><path d="M30 0v30H0z" fill="#dedede"/></svg></th>
        ${COLUMNS.map((c) => html`<th scope="col" class=${classMap({ on: c === this.column })}>${c}</th>`)}
      </tr></thead>
      <tbody>
        ${rows.map((r, i) => html`<tr>
          <th scope="row" class=${classMap({ on: i + 1 === this.row })}>${i < ROWS.length ? i + 1 : ""}</th>
          ${COLUMNS.map((c, j) => {
            const active = i + 1 === this.row && c === this.column;
            const num = j < 4 && j !== 1 && i > 0;
            return html`<td class=${classMap({ num, active })}>${r[j] ?? ""}${active ? html`<span class="cursor"></span>` : ""}</td>`;
          })}
        </tr>`)}
      </tbody>
    </table>`;
  }
}

@customElement("sheet-tabs")
export class SheetTabs extends LitElement {
  static styles = [shared, css`
    :host { display: block; }
    .bar {
      display: flex;
      align-items: center;
      height: 54px;
      padding-left: 30px;
      padding-bottom: 4px;
      background: #efefef;
      border-top: 2px solid #cdcdcd;
      border-bottom: 2px solid #a2a2a2;
    }
    .nav { display: flex; gap: 32px; margin-right: 30px; }
    .tab {
      align-self: flex-start;
      height: 46px;
      margin-top: -2px;
      padding: 6px 33px 0;
      font: 700 24px/38px "Liberation Sans", sans-serif;
      color: #2b8253;
      background: #fff;
      border: 2px solid #cdcdcd;
      border-top: 0;
      border-bottom-color: #a5a5a5;
      border-radius: 0 0 6px 6px;
    }
    .add { padding: 0 26px 0 27px; height: 42px; border-right: 2px solid #cfcfcf; }
  `];
  render() {
    return html`<div class="bar">
      <div class="nav"><button aria-label="Previous sheet">${icons.prev}</button><button aria-label="Next sheet">${icons.next}</button></div>
      <button class="tab">top_10_odds</button>
      <button class="add" aria-label="New sheet">${icons.add}</button>
    </div>`;
  }
}

@customElement("status-bar")
export class StatusBar extends LitElement {
  static styles = [shared, css`
    :host { display: block; }
    .bar {
      display: flex;
      justify-content: flex-end;
      align-items: center;
      height: 44px;
      padding-right: 50px;
      font-size: 24px;
      color: #505050;
      background: linear-gradient(#e3e3e3, #d8d8d8);
    }
    .view { display: grid; place-items: center; width: 71px; height: 44px; }
    .view.on { width: 74px; background: #a6a6a6; }
    .step { display: grid; place-items: center; width: 24px; height: 44px; }
    .zoom { appearance: none; width: 200px; height: 34px; margin: 0 10px; }
    .zoom::-webkit-slider-runnable-track { height: 8px; border-radius: 4px; background: #9b9b9b; }
    .zoom::-webkit-slider-thumb {
      appearance: none;
      width: 32px;
      height: 32px;
      margin-top: -12px;
      border-radius: 50%;
      background: #fff;
      box-shadow: 0 1px 3px #0006;
    }
    .views { display: flex; margin-right: 12px; }
    .pct { margin-left: 31px; line-height: 40px; padding-bottom: 2px; font-family: "Open Sans", sans-serif; }
  `];
  render() {
    return html`<footer class="bar">
      <div class="views">
        <button class="view on" aria-label="Normal view">${icons.viewGrid}</button>
        <button class="view" aria-label="Page layout view">${icons.viewPage}</button>
        <button class="view" aria-label="Page break preview">${icons.viewBreak}</button>
      </div>
      <button class="step" aria-label="Zoom out">${icons.minus}</button>
      <input class="zoom" type="range" aria-label="Zoom" min="0" max="200" value="100" />
      <button class="step" aria-label="Zoom in">${icons.plus}</button>
      <span class="pct">100%</span>
    </footer>`;
  }
}

@customElement("app-root")
export class AppRoot extends LitElement {
  static styles = css`
    :host {
      display: flex;
      flex-direction: column;
      height: 100vh;
      overflow: hidden;
      font-family: Inter, "Liberation Sans", sans-serif;
      background: #efefef;
    }
    .grid { flex: 1; min-height: 0; }
  `;
  render() {
    return html`
      <title-bar></title-bar>
      <ribbon-tabs></ribbon-tabs>
      <ribbon-panel></ribbon-panel>
      <notice-bar></notice-bar>
      <formula-bar></formula-bar>
      <sheet-grid class="grid"></sheet-grid>
      <sheet-tabs></sheet-tabs>
      <status-bar></status-bar>
    `;
  }
}
